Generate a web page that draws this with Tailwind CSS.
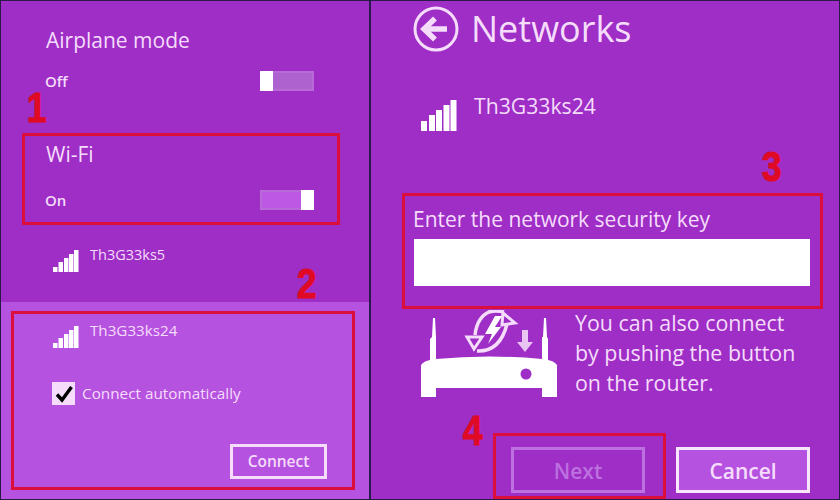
<!DOCTYPE html>
<html>
<head>
<meta charset="utf-8">
<script src="https://cdn.jsdelivr.net/npm/@tailwindcss/browser@4"></script>
</head>
<body class="m-0">
<div class="relative w-[840px] h-[500px] overflow-hidden flex bg-[#2a1a4a] p-px gap-[2px] font-['Open_Sans',sans-serif] text-[#f5dcfb]">

  <!-- Left panel -->
  <section class="w-[368px] flex flex-col bg-[#9e2ec6]">
    <div class="h-[301px] flex flex-col">
      <div class="pl-[45px] pr-[55px] pt-[24px]">
        <h2 class="text-[21px] leading-[30px]">Airplane mode</h2>
        <div class="mt-[15px] flex items-center justify-between h-[22px]">
          <span class="text-[15px] font-semibold -ml-px pt-[1px]">Off</span>
          <div class="w-[54px] h-[20px] flex border-2 border-[#b86bd8] bg-[#ae62cf]">
            <div class="w-[13px] -my-[2px] -ml-[2px] bg-white"></div>
          </div>
        </div>
      </div>
      <div class="pl-[45px] pr-[55px] pt-[47px]">
        <h2 class="text-[21px] leading-[30px]">Wi-Fi</h2>
        <div class="mt-[20px] flex items-center justify-between h-[22px]">
          <span class="text-[15px] font-semibold -ml-px">On</span>
          <div class="w-[54px] h-[20px] flex justify-end border-2 border-[#b86bd8] bg-[#bc58e4]">
            <div class="w-[13px] -my-[2px] -mr-[2px] bg-white"></div>
          </div>
        </div>
      </div>
      <div class="pl-[51px] pt-[37px] flex gap-[11px]">
        <svg class="w-[27px] h-[23px] mt-[2px]" viewBox="0 0 27 23" fill="#fff"><rect x="1" y="17" width="4.500" height="5"/><rect x="6.500" y="12" width="4.500" height="10"/><rect x="12" y="8" width="4.500" height="14"/><rect x="17" y="4" width="4.500" height="18"/><rect x="22" y="0" width="4.500" height="22"/></svg>
        <span class="text-[14.5px] leading-[20px] -mt-[3px]">Th3G33ks5</span>
      </div>
    </div>
    <div class="flex-1 bg-[#b552e0] pl-[51px] pt-[22px] relative">
      <div class="flex gap-[11px]">
        <svg class="w-[27px] h-[23px] mt-[2px]" viewBox="0 0 27 23" fill="#fff"><rect x="1" y="17" width="4.500" height="5"/><rect x="6.500" y="12" width="4.500" height="10"/><rect x="12" y="8" width="4.500" height="14"/><rect x="17" y="4" width="4.500" height="18"/><rect x="22" y="0" width="4.500" height="22"/></svg>
        <span class="text-[15.2px] leading-[20px] -mt-[4px] mb-[1px]">Th3G33ks24</span>
      </div>
      <div class="mt-[33px] flex items-center gap-[7px]">
        <div class="w-[23px] h-[23px] bg-[#f5dcfb] flex items-center justify-center">
          <svg class="w-[20px] h-[20px]" viewBox="0 0 20 20" fill="none" stroke="#000" stroke-width="3.4"><path d="M3 10.5 L8 16 L17.5 3"/></svg>
        </div>
        <span class="text-[15.3px]">Connect automatically</span>
      </div>
      <div class="mt-[39px] ml-[178px] w-[97px] h-[35px] border-[3px] border-[#f5dcfb] flex items-center justify-center text-[15.5px] font-semibold">Connect</div>
    </div>
  </section>

  <!-- Right panel -->
  <section class="flex-1 bg-[#9e2ec6] pl-[43px] pr-[29px] flex flex-col">
    <header class="flex items-center gap-[12px] h-[56px]">
      <svg class="w-[46px] h-[46px] shrink-0 -ml-px" viewBox="0 0 46 46" fill="none" stroke="#f5dcfb"><circle cx="23" cy="23" r="21" stroke-width="3"/><path d="M12 23H34" stroke-width="5.5"/><path d="M22 12.5 L11 23 L22 33.5" stroke-width="5.5"/></svg>
      <h1 class="text-[36px] leading-[44px]">Networks</h1>
    </header>
    <div class="flex gap-[17px] ml-[7px] mt-[42px] h-[90px]">
      <svg class="w-[36px] h-[32px] mt-[1px]" viewBox="0 0 36 32" fill="#fff"><rect x="0" y="21" width="6" height="10"/><rect x="8" y="15" width="6" height="16"/><rect x="15" y="10" width="6" height="21"/><rect x="22.500" y="5" width="6" height="26"/><rect x="29.500" y="0" width="6" height="31"/></svg>
      <span class="text-[21.2px] leading-[28px] -mt-[7px]">Th3G33ks24</span>
    </div>
    <label class="block text-[21px] leading-[30px] mt-[15px] -ml-px">Enter the network security key</label>
    <div class="mt-[5px] h-[47px] w-[396px] bg-white"></div>
    <div class="flex mt-[24px] ml-[7px] gap-[18px]">
      <svg class="w-[136px] h-[90px] shrink-0" viewBox="0 0 136 90" fill="none">
        <path d="M9 50 V29 L11 27 L12 8 H14 L15 27 L15 49 Q68 44 121 49 V27 L122 27 L123 8 H125 L126 27 L127 29 V50 Q133 51 136 55 V87 H121 V78 H15 V87 H0 V55 Q3 51 9 50 Z" fill="#fff"/>
        <circle cx="105" cy="64" r="5.500" fill="#9e2ec6"/>
        <path d="M69 1.500 Q56 7 54 25" stroke="#f5dcfb" stroke-width="3.500"/>
        <path d="M46 27 H61 L53 39 Z" stroke="#f5dcfb" stroke-width="3" fill="#9e2ec6"/>
        <path d="M56 41 Q79 42 86 14" stroke="#f5dcfb" stroke-width="3.500"/>
        <path d="M68 2 Q75 0 83 2" stroke="#f5dcfb" stroke-width="3.500"/>
        <path d="M82 3 L94 13 L81 15 Z" stroke="#f5dcfb" stroke-width="3" fill="#9e2ec6"/>
        <path d="M74 6 L64 24 H71 L67 34 L80 17 H74 L81 6 Z" fill="#fff"/>
        <path d="M101 20 H107 V32 H112 L104 42 L96 32 H101 Z" fill="#e9c5f4"/>
      </svg>
      <p class="text-[21.4px] leading-[30px] -mt-[2px]">You can also connect<br>by pushing the button<br>on the router.</p>
    </div>
    <div class="flex justify-end gap-[31px] mt-[47px] w-[396px]">
      <div class="w-[134px] h-[46px] border-[3px] border-[#bd70df] flex items-center justify-center text-[21px] font-semibold text-[#bd70df] pt-[4px]">Next</div>
      <div class="w-[134px] h-[46px] border-[3px] border-[#f8e6fc] bg-[#b552e0] flex items-center justify-center text-[21px] font-semibold pt-[4px]">Cancel</div>
    </div>
  </section>

  <!-- Red annotations -->
  <div class="absolute left-[22px] top-[133px] w-[318px] h-[92px] border-[3px] border-[#dc0f3c]"></div>
  <div class="absolute left-[11px] top-[311px] w-[344px] h-[179px] border-[3px] border-[#dc0f3c]"></div>
  <div class="absolute left-[402px] top-[193px] w-[421px] h-[116px] border-[3px] border-[#dc0f3c]"></div>
  <div class="absolute left-[493px] top-[433px] w-[173px] h-[66px] border-[3px] border-[#dc0f3c]"></div>
  <span class="absolute left-[25px] top-[85px] text-[42px] leading-[46px] font-bold text-[#e00a24] scale-x-[.85] [-webkit-text-stroke:1px_#e00a24] font-['Liberation_Sans',sans-serif]">1</span>
  <span class="absolute left-[295px] top-[261px] text-[42px] leading-[46px] font-bold text-[#e00a24] scale-x-[.85] [-webkit-text-stroke:1px_#e00a24] font-['Liberation_Sans',sans-serif]">2</span>
  <span class="absolute left-[760px] top-[144px] text-[42px] leading-[46px] font-bold text-[#e00a24] scale-x-[.85] [-webkit-text-stroke:1px_#e00a24] font-['Liberation_Sans',sans-serif]">3</span>
  <span class="absolute left-[461px] top-[408px] text-[42px] leading-[46px] font-bold text-[#e00a24] scale-x-[.85] [-webkit-text-stroke:1px_#e00a24] font-['Liberation_Sans',sans-serif]">4</span>
</div>
</body>
</html>
